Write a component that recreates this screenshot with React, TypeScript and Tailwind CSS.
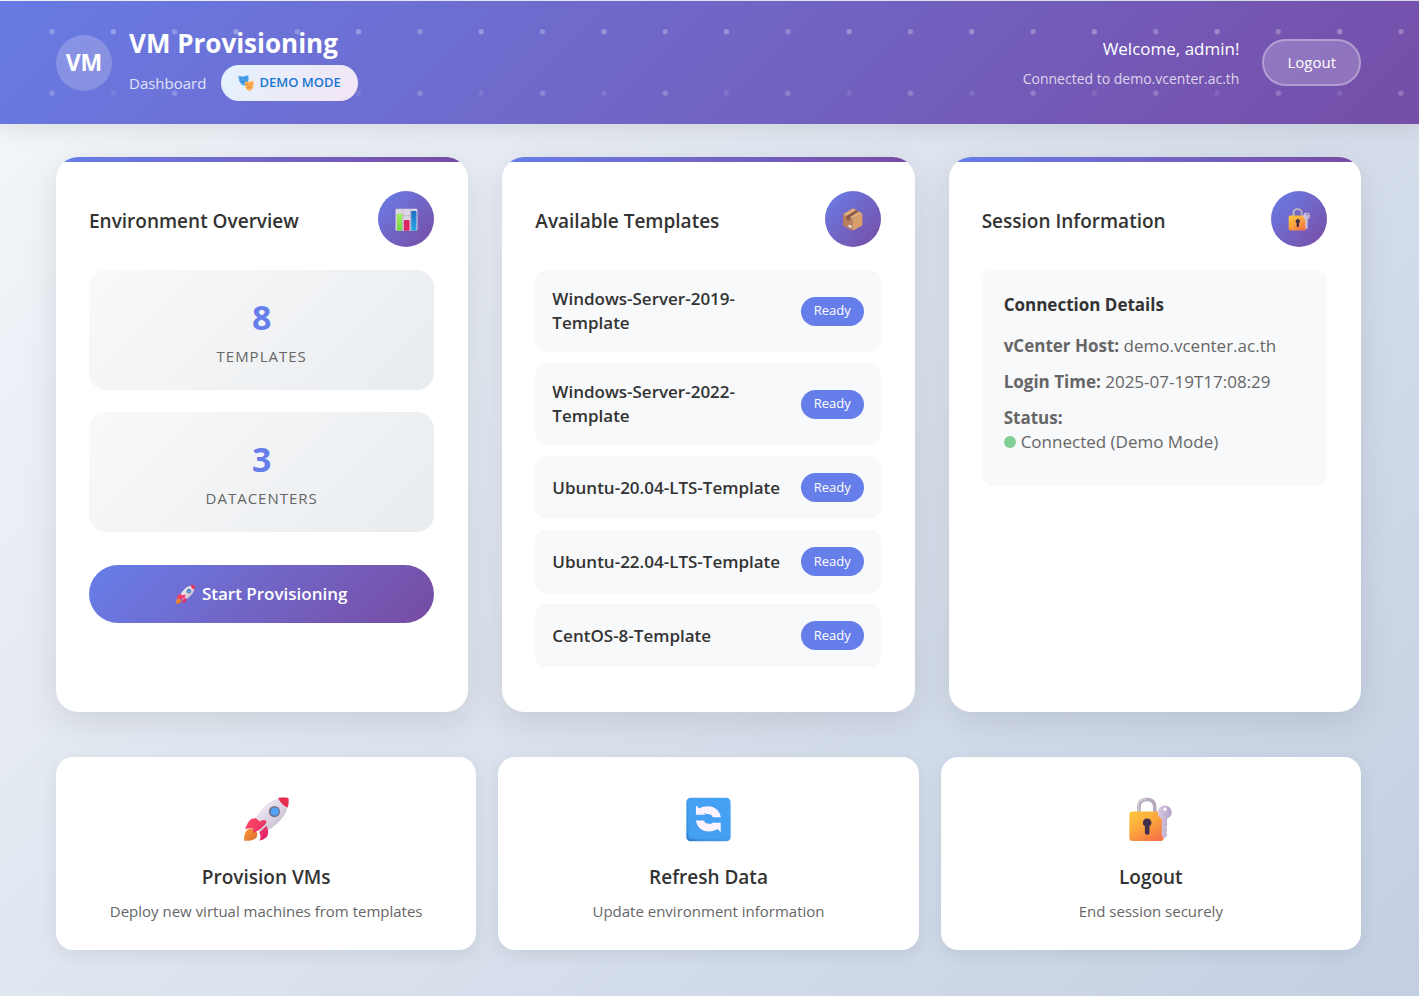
import { useId, type ReactNode } from "react";

type IconProps = { className?: string };

function RocketIcon({ className }: IconProps) {
  const id = useId();
  return (
    <svg viewBox="24 36 136 134" className={className} aria-hidden="true">
      <defs>
        <linearGradient id={`${id}b`} x1="0" y1="0" x2="1" y2="1">
          <stop offset="0.2" stopColor="#f3ecf7" />
          <stop offset="0.8" stopColor="#c9bdd0" />
        </linearGradient>
        <linearGradient id={`${id}f`} x1="0" y1="0" x2="1" y2="1">
          <stop offset="0" stopColor="#ff9a3c" />
          <stop offset="1" stopColor="#d96a2b" />
        </linearGradient>
        <linearGradient id={`${id}r`} x1="0" y1="0" x2="1" y2="1">
          <stop offset="0" stopColor="#ff4c63" />
          <stop offset="1" stopColor="#e0206a" />
        </linearGradient>
      </defs>
      <path d="M158 38c-28-2-52 6-68 22-17 15-32 34-42 58l30 28c22-10 46-28 57-42 16-17 24-38 23-66z" fill={`url(#${id}b)`} />
      <path d="M127 38c11-2 22-2 31 0 2 9 1 19-2 29-13-5-22-14-29-29z" fill="#e82c50" />
      <circle cx="116" cy="79" r="17" fill="#74748c" />
      <circle cx="117" cy="79" r="12" fill="#4fa4f5" />
      <path d="M34 134c-8 8-11 21-9 33 14 1 28-1 36-9 5-6 4-14-1-20-7-7-18-9-26-4z" fill={`url(#${id}f)`} />
      <path d="M60 99c-12-1-20 5-24 14l-9 19c10-3 18-3 26 0l20-22zM92 122l-22 20c5 8 5 16 1 25 9-2 17-6 22-12 6-8 5-20-1-33z" fill={`url(#${id}r)`} />
      <path d="M90 106c-6-4-15-1-22 7-9 9-16 18-18 29 10 0 22-8 30-16 9-8 15-15 10-20z" fill={`url(#${id}r)`} />
    </svg>
  );
}

function LockKeyIcon({ className }: IconProps) {
  const id = useId();
  return (
    <svg viewBox="30 34 136 136" className={className} aria-hidden="true">
      <defs>
        <linearGradient id={`${id}l`} x1="0" y1="0" x2="0.7" y2="1">
          <stop offset="0" stopColor="#ffc83d" />
          <stop offset="0.5" stopColor="#fba83c" />
          <stop offset="1" stopColor="#f57645" />
        </linearGradient>
        <linearGradient id={`${id}k`} x1="0" y1="0" x2="1" y2="0">
          <stop offset="0" stopColor="#d8cce6" />
          <stop offset="1" stopColor="#b3a1c6" />
        </linearGradient>
      </defs>
      <path d="M63 84V64c0-14 9-23 24-23s24 9 24 23v20" fill="none" stroke="#b6aabd" strokeWidth="11" />
      <path d="M61 78V63c0-14 10-23 25-23" fill="none" stroke="#d4cdd8" strokeWidth="4" />
      <rect x="34" y="78" width="104" height="89" rx="10" fill={`url(#${id}l)`} />
      <path d="M88 99c-8 0-13 6-13 13 0 5 2 8 6 10v19c0 9 14 9 14 0v-19c4-2 6-5 6-10 0-7-5-13-13-13z" fill="#432f4c" />
      <path
        d="M142 60c-13 0-22 9-22 21 0 9 5 16 12 19v51l7 9 9-8v-6l-3-5 3-5v-6l-3-4 3-5v-21c8-3 14-10 14-19 0-12-9-21-20-21zm0 6a5 5 0 1 1 0 10 5 5 0 0 1 0-10z"
        fill={`url(#${id}k)`}
        fillRule="evenodd"
      />
    </svg>
  );
}

const refreshArrow = "M60 60l10 9c7-5 16-7 26-7 21 0 36 13 39 33h-24c-3-7-8-10-15-10-5 0-9 0-12-2l5 5H60z";

function RefreshIcon({ className }: IconProps) {
  const id = useId();
  return (
    <svg viewBox="30 34 136 136" className={className} aria-hidden="true">
      <defs>
        <linearGradient id={`${id}s`} x1="0" y1="1" x2="1" y2="0">
          <stop offset="0" stopColor="#2d74c4" />
          <stop offset="0.15" stopColor="#3b8fe0" />
          <stop offset="1" stopColor="#54adff" />
        </linearGradient>
      </defs>
      <rect x="31" y="36" width="134" height="132" rx="13" fill={`url(#${id}s)`} />
      <rect x="37" y="38" width="124" height="122" rx="10" fill="#45a0f4" />
      <path d={refreshArrow} fill="#fdf3ff" />
      <path d={refreshArrow} fill="#fdf3ff" transform="rotate(180 97.5 100)" />
    </svg>
  );
}

function ChartIcon({ className }: IconProps) {
  const id = useId();
  return (
    <svg viewBox="74 85 68 69" className={className} aria-hidden="true">
      <defs>
        <linearGradient id={`${id}g`} x1="0" y1="0" x2="0" y2="1">
          <stop offset="0" stopColor="#a6ef5f" />
          <stop offset="1" stopColor="#6fd84b" />
        </linearGradient>
        <linearGradient id={`${id}b`} x1="0" y1="0" x2="0" y2="1">
          <stop offset="0" stopColor="#1c6fc4" />
          <stop offset="1" stopColor="#2fa6e6" />
        </linearGradient>
      </defs>
      <rect x="75" y="87" width="66" height="66" rx="4" fill="#dcd5e3" />
      <path d="M97 87v66M120 87v66M75 108h66M75 131h66" stroke="#b5a9c3" strokeWidth="2" />
      <rect x="79" y="102" width="16" height="51" rx="2" fill={`url(#${id}g)`} />
      <rect x="100" y="121" width="17" height="32" rx="2" fill="#d92866" />
      <rect x="122" y="94" width="16" height="59" rx="2" fill={`url(#${id}b)`} />
    </svg>
  );
}

function PackageIcon({ className }: IconProps) {
  return (
    <svg viewBox="78 86 66 70" className={className} aria-hidden="true">
      <path d="M82 105l29 13v37l-27-14c-1-1-2-2-2-4z" fill="#b97e5a" />
      <path d="M141 103l-30 15v37l28-15c1-1 2-2 2-4z" fill="#d9a06b" />
      <path d="M82 105l28-17c2-1 4-1 6 0l25 15-30 15z" fill="#e0ab77" />
      <path d="M93 110l29-18 8 5-27 17v10l-5 0-5-4z" fill="#8a5a49" />
      <path d="M99 136l9 4v8l-9-5z" fill="#f0e4ee" />
    </svg>
  );
}

function MasksIcon({ className }: IconProps) {
  return (
    <svg viewBox="0 0 44 44" className={className} aria-hidden="true">
      <path d="M1 2c9 3 18 3 27-1 3 14-1 26-10 28C8 29 2 18 1 2z" fill="#4ba3ef" />
      <path d="M6 11q3-3 6 0M17 10q3-3 6 0M8 17q7 5 13-1" stroke="#2470bd" strokeWidth="2" fill="none" />
      <path d="M19 18c8 2 16 1 24-2 1 14-2 26-11 27-9 0-14-11-13-25z" fill="#fdb050" />
      <path d="M23 26q3 2 5 0M34 25q3 2 5 0M25 36q6-7 12-1" stroke="#c4713f" strokeWidth="2" fill="none" />
    </svg>
  );
}

function HeaderDots() {
  const id = useId();
  return (
    <svg className="pointer-events-none absolute inset-0 h-full w-full" aria-hidden="true">
      <defs>
        <pattern id={id} x="21" y="0" width="122.64" height="123" patternUnits="userSpaceOnUse">
          <circle cx="31" cy="30.7" r="2.6" fill="#fff" fillOpacity="0.25" />
          <circle cx="92.3" cy="30.7" r="2.6" fill="#fff" fillOpacity="0.3" />
          <circle cx="31" cy="92.2" r="2.6" fill="#fff" fillOpacity="0.22" />
          <circle cx="92.3" cy="92.2" r="2.6" fill="#fff" fillOpacity="0.1" />
        </pattern>
      </defs>
      <rect width="100%" height="100%" fill={`url(#${id})`} />
    </svg>
  );
}

function Card({ title, icon, children }: { title: string; icon: ReactNode; children: ReactNode }) {
  return (
    <section className="relative overflow-hidden rounded-[22px] bg-white shadow-[0_9px_34px_rgba(0,0,0,0.1)]">
      <div className="absolute inset-x-0 top-0 h-[5px] bg-linear-to-r from-[#667eea] to-[#764ba2]" />
      <div className="pt-[34px] pr-[34px] pb-[45px] pl-[33px]">
        <div className="mb-[23px] flex items-center justify-between">
          <h2 className="pt-1 text-[19px] leading-7 font-semibold text-[#333]">{title}</h2>
          <div className="flex size-14 items-center justify-center rounded-full bg-linear-135 from-[#667eea] to-[#764ba2]">
            {icon}
          </div>
        </div>
        {children}
      </div>
    </section>
  );
}

function Stat({ value, label }: { value: number; label: string }) {
  return (
    <div className="mb-[22px] flex h-[120px] flex-col items-center rounded-[17px] bg-linear-135 from-[#f8f9fa] to-[#e9ecef] pt-[22px]">
      <div className="text-[34px] leading-[50px] font-bold text-[#667eea]">{value}</div>
      <div className="text-[15px] leading-7 tracking-[1px] text-[#666] uppercase">{label}</div>
    </div>
  );
}

const templates = [
  "Windows-Server-2019-Template",
  "Windows-Server-2022-Template",
  "Ubuntu-20.04-LTS-Template",
  "Ubuntu-22.04-LTS-Template",
  "CentOS-8-Template",
];

const actions = [
  { title: "Provision VMs", text: "Deploy new virtual machines from templates", Icon: RocketIcon },
  { title: "Refresh Data", text: "Update environment information", Icon: RefreshIcon },
  { title: "Logout", text: "End session securely", Icon: LockKeyIcon },
];

export default function App() {
  return (
    <div className="min-h-screen bg-linear-135 from-[#f5f7fa] to-[#c3cfe2] pt-px pb-[46px] font-['Open_Sans','Noto_Sans',sans-serif] text-[#333]">
      <header className="relative bg-linear-135 from-[#677be3] to-[#754ea8] shadow-[0_4px_22px_rgba(0,0,0,0.1)]">
        <HeaderDots />
        <div className="relative flex min-h-[123px] items-center justify-between pr-[58px] pl-14">
          <div className="flex items-center gap-[17px]">
            <div className="flex size-14 items-center justify-center rounded-full bg-white/20 text-[23px] font-bold text-white">
              VM
            </div>
            <div>
              <h1 className="text-[26px] leading-[38px] font-bold text-white">VM Provisioning</h1>
              <div className="mt-[3px] flex items-center gap-[15px]">
                <span className="text-[15px] text-white/80">Dashboard</span>
                <span className="flex h-9 items-center gap-[5px] rounded-full bg-linear-135 from-[#e3f2fd] to-[#f3e5f5] px-[17px] text-[13px] font-semibold text-[#1976d2]">
                  <MasksIcon className="size-4" />
                  DEMO MODE
                </span>
              </div>
            </div>
          </div>
          <div className="flex items-center gap-[23px]">
            <div className="text-right">
              <div className="text-[17px] leading-7 font-medium text-white">Welcome, admin!</div>
              <div className="mt-1 text-[14px] leading-6 text-white/75">Connected to demo.vcenter.ac.th</div>
            </div>
            <button type="button" className="h-[47px] cursor-pointer rounded-full border-2 border-white/30 bg-white/20 px-[23px] text-[15px] font-medium text-white">
              Logout
            </button>
          </div>
        </div>
      </header>

      <main className="pt-[33px] pr-[58px] pl-14">
        <div className="grid grid-cols-3 gap-[34px]">
          <Card title="Environment Overview" icon={<ChartIcon className="size-[23px]" />}>
            <Stat value={8} label="Templates" />
            <Stat value={3} label="Datacenters" />
            <button type="button" className="mt-[33px] flex h-[58px] w-full cursor-pointer items-center justify-center gap-[7px] rounded-full bg-linear-135 from-[#667eea] to-[#764ba2] text-[17px] font-semibold text-white">
              <RocketIcon className="size-[19px]" />
              Start Provisioning
            </button>
          </Card>

          <Card title="Available Templates" icon={<PackageIcon className="size-[23px]" />}>
            <ul className="flex flex-col gap-[11px]">
              {templates.map((name) => (
                <li key={name} className="flex items-center justify-between gap-2 rounded-[11px] bg-[#f8f9fb] p-[17px]">
                  <span className="text-[17px] leading-6 font-semibold">{name}</span>
                  <span className="flex h-[29px] shrink-0 items-center rounded-full bg-[#667eea] px-[13px] text-[13px] font-medium text-white">
                    Ready
                  </span>
                </li>
              ))}
            </ul>
          </Card>

          <Card title="Session Information" icon={<LockKeyIcon className="size-[23px]" />}>
            <div className="rounded-[11px] bg-[#f8f9fb] px-[22px] pt-[23px] pb-8 text-[17px] leading-6 text-[#666]">
              <h3 className="mb-[17px] font-bold text-[#333]">Connection Details</h3>
              <p className="mb-3"><strong>vCenter Host:</strong> demo.vcenter.ac.th</p>
              <p className="mb-3"><strong>Login Time:</strong> 2025-07-19T17:08:29</p>
              <div>
                <strong className="block">Status:</strong>
                <div className="flex items-center gap-[5px]">
                  <span className="size-3 rounded-full bg-[#81cf95]" />
                  Connected (Demo Mode)
                </div>
              </div>
            </div>
          </Card>
        </div>

        <div className="mt-[45px] grid grid-cols-3 gap-[22px]">
          {actions.map(({ title, text, Icon }) => (
            <a key={title} href="#" className="flex h-[193px] flex-col items-center rounded-[17px] bg-white pt-10 text-center shadow-[0_4px_17px_rgba(0,0,0,0.08)]">
              <Icon className="size-[45px]" />
              <h3 className="mt-[21px] text-[19px] leading-7 font-semibold text-[#333]">{title}</h3>
              <p className="mt-2 text-[15px] leading-6 text-[#666]">{text}</p>
            </a>
          ))}
        </div>
      </main>
    </div>
  );
}
